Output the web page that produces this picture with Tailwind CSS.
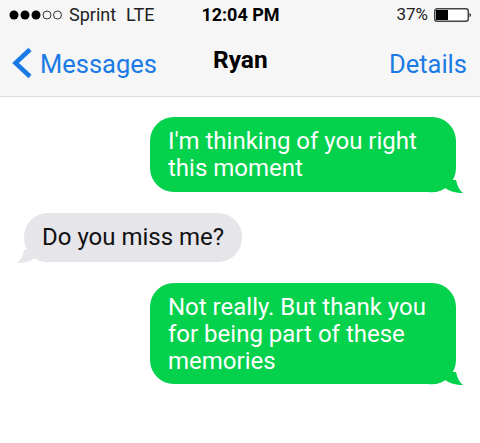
<!DOCTYPE html>
<html lang="en">
<head>
    <meta charset="UTF-8">
    <title>Ryan</title>
    <script src="https://cdn.jsdelivr.net/npm/@tailwindcss/browser@4"></script>
</head>
<body class="bg-white w-[480px] h-[443px] overflow-hidden font-['Roboto',sans-serif]">

    <!-- Top bars -->
    <header class="bg-[#f6f6f6] h-[97px] border-b border-[#dcdcdc]">
        <div class="h-[28px] pl-[9px] pr-[8px] pt-[1px] flex items-center justify-between text-[17px] text-[#222]">
            <div class="flex items-center w-[180px]">
                <svg width="54" height="12" viewBox="0 0 54 12" class="mr-[6px]">
                    <circle cx="5" cy="6" r="4.5" fill="#000"/>
                    <circle cx="16" cy="6" r="4.5" fill="#000"/>
                    <circle cx="27" cy="6" r="4.5" fill="#000"/>
                    <circle cx="38" cy="6" r="4" fill="none" stroke="#333" stroke-width="1"/>
                    <circle cx="48.5" cy="6" r="4" fill="none" stroke="#333" stroke-width="1"/>
                </svg>
                <span class="text-[18px]">Sprint</span>
                <span class="ml-[10px] text-[18px]">LTE</span>
            </div>
            <span class="font-bold text-black text-[18px]">12:04 PM</span>
            <div class="flex items-center justify-end w-[180px]">
                <span>37%</span>
                <svg width="38" height="16" viewBox="0 0 38 16" class="ml-[6px]">
                    <rect x="0.75" y="1.75" width="33.5" height="12.5" rx="2.5" fill="#fff" stroke="#444" stroke-width="1.5"/>
                    <rect x="2" y="3" width="12" height="10" fill="#000"/>
                    <path d="M35.5 6v4c1-.3 1.5-1 1.5-2s-.5-1.7-1.5-2z" fill="#333"/>
                </svg>
            </div>
        </div>
        <nav class="h-[68px] relative flex items-center justify-between pl-[11px] pr-[13px] pt-[4px] text-[25.5px]">
            <div class="flex items-center text-[#1a7be6]">
                <svg width="22" height="32" viewBox="0 0 22 32" class="mr-[7px] -mt-[2px]">
                    <path d="M19 2.5 L4.5 16 L19 29.5" fill="none" stroke="#1a7be6" stroke-width="4.5"/>
                </svg>
                <span>Messages</span>
            </div>
            <span class="absolute left-[213px] top-[14px] font-bold text-[24.5px] text-black">Ryan</span>
            <span class="text-[#1a7be6]">Details</span>
        </nav>
    </header>

    <!-- Conversation -->
    <main class="flex flex-col pt-[20px] gap-[21px] text-[24px] leading-[27px]">
        <div class="self-end mr-[24px] relative w-[306px] h-[75px] bg-[#04d14c] rounded-[24px] text-white pl-[18px] pr-[15px] py-[11px]">
            <p>I'm thinking of you right this moment</p>
            <svg width="36" height="14" viewBox="0 0 36 14" class="absolute right-[-8px] bottom-[-2px]">
                <path d="M0 12 C8 13 13 11 17 8 C21 11 28 13 35 13 C31 10 29 5 28 0 L4 0 Z" fill="#04d14c"/>
            </svg>
        </div>

        <div class="self-start ml-[24px] relative w-[218px] h-[49px] bg-[#e5e5ea] rounded-[24px] text-[#111] pl-[18px] py-[11px]">
            <p class="whitespace-nowrap">Do you miss me?</p>
            <svg width="36" height="14" viewBox="0 0 36 14" class="absolute left-[-8px] bottom-[-2px]">
                <path d="M36 12 C28 13 23 11 19 8 C15 11 8 13 1 13 C5 10 7 5 8 0 L32 0 Z" fill="#e5e5ea"/>
            </svg>
        </div>

        <div class="self-end mr-[24px] relative w-[306px] h-[101px] bg-[#04d14c] rounded-[24px] text-white pl-[18px] pr-[15px] py-[11px]">
            <p>Not really. But thank you for being part of these memories</p>
            <svg width="36" height="14" viewBox="0 0 36 14" class="absolute right-[-8px] bottom-[-2px]">
                <path d="M0 12 C8 13 13 11 17 8 C21 11 28 13 35 13 C31 10 29 5 28 0 L4 0 Z" fill="#04d14c"/>
            </svg>
        </div>
    </main>
</body>
</html>
